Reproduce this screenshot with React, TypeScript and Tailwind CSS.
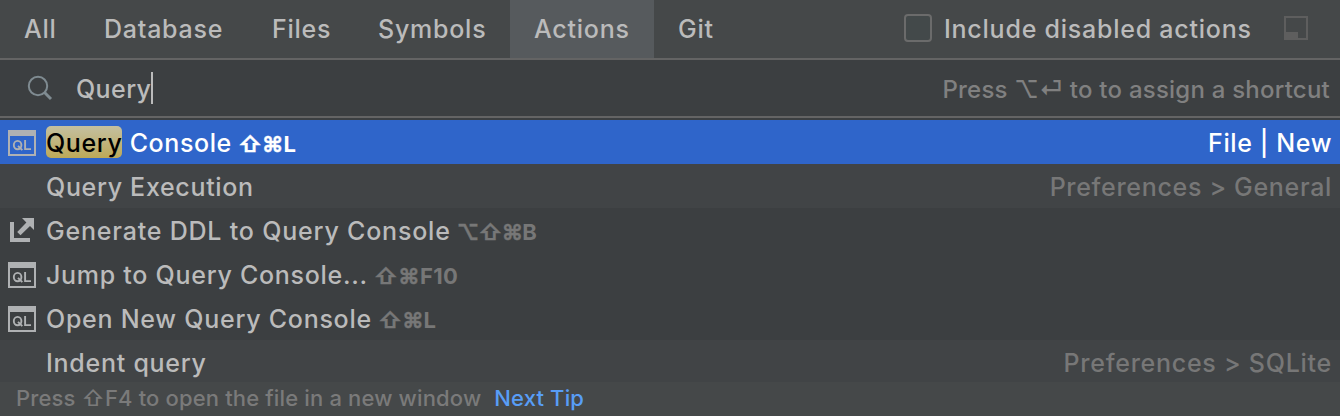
import React from "react";

const tabs = [
  { label: "All", cls: "w-20" },
  { label: "Database", cls: "w-[168px]" },
  { label: "Files", cls: "w-[106px]" },
  { label: "Symbols", cls: "w-[156px]" },
  { label: "Actions", cls: "w-36 bg-[#565a5d]" },
  { label: "Git", cls: "w-[84px]" },
];

function QueryIcon() {
  return (
    <svg width="28" height="26" viewBox="0 0 28 26" className="block">
      <path fill="#afb1b3" fillRule="evenodd" d="M0 0H28V26H0ZM2 6V24H26V6Z" />
      <g fill="none" stroke="#afb1b3" strokeWidth="1.9">
        <ellipse cx="9.6" cy="15.1" rx="3.8" ry="4.2" />
        <path d="M10 15.8L14.3 20.2M17.1 10V19.1H23" />
      </g>
    </svg>
  );
}

function ExportIcon() {
  return (
    <svg width="28" height="26" viewBox="0 0 28 26" className="block">
      <path fill="#afb1b3" d="M2 4H6V20H22V24H2Z" />
      <path fill="#afb1b3" d="M14 0H26V12L22 8L12.5 17.3L9.2 14L18.4 4.4Z" />
    </svg>
  );
}

type Row = {
  icon?: "ql" | "export";
  label: string;
  match?: string;
  mods?: string;
  keyName?: string;
  keysTrack?: string;
  path?: string;
  track: string;
  bg: string;
};

const rows: Row[] = [
  { icon: "ql", match: "Query", label: " Console", mods: "⇧⌘", keyName: "L", path: "File | New", track: "tracking-[0.6px]", bg: "h-11 bg-[#2f65ca] text-white" },
  { label: "Query Execution", path: "Preferences > General", track: "tracking-[0.68px]", bg: "h-11 bg-[#414446]" },
  { icon: "export", label: "Generate DDL to Query Console", mods: "⌥⇧⌘", keyName: "B", keysTrack: "tracking-[-0.8px]", track: "tracking-[0.8px]", bg: "h-11 bg-[#3c3f41]" },
  { icon: "ql", label: "Jump to Query Console...", mods: "⇧⌘", keyName: "F10", keysTrack: "tracking-[0.3px]", track: "tracking-[0.72px]", bg: "h-11 bg-[#3c3f41]" },
  { icon: "ql", label: "Open New Query Console", mods: "⇧⌘", keyName: "L", track: "tracking-[0.74px]", bg: "h-11 bg-[#3c3f41]" },
  { label: "Indent query", path: "Preferences > SQLite", track: "tracking-[0.74px]", bg: "h-[42px] bg-[#414446]" },
];

function ResultRow({ row, selected }: { row: Row; selected: boolean }) {
  return (
    <div className={`flex items-start px-2 ${row.bg}`}>
      <div className="mt-2.5 w-[38px] shrink-0">
        {row.icon === "ql" && <QueryIcon />}
        {row.icon === "export" && <ExportIcon />}
      </div>
      <div className={`flex whitespace-pre text-[25px] leading-[46px] ${row.track}`}>
        {row.match && (
          <span className="mt-1.5 h-8 rounded-[5px] bg-linear-to-b from-[#c4c0a0] to-[#bda957] leading-[34px] text-black">{row.match}</span>
        )}
        <span>{row.label}</span>
      </div>
      {row.mods && (
        <span className={`ml-1.5 mt-[3px] text-[22px] font-bold leading-[42px] ${row.keysTrack ?? ""} ${selected ? "text-white" : "text-[#777777]"}`}>
          <span className="[-webkit-text-stroke:0.35px_currentColor]">{row.mods}</span>
          {row.keyName}
        </span>
      )}
      {row.path && (
        <span className={`ml-auto whitespace-pre text-[25px] leading-[46px] ${row.track} ${selected ? "text-white" : "text-[#777777]"}`}>{row.path}</span>
      )}
    </div>
  );
}

export default function App() {
  return (
    <div className="flex h-[416px] w-[1340px] flex-col overflow-hidden bg-[#454849] font-['Inter','DejaVu_Sans',sans-serif] font-medium text-[#bbbbbb]">
      <header className="flex h-[60px] shrink-0 border-b-2 border-[#646464] text-[25px] leading-[58px] tracking-[0.76px]">
        {tabs.map((t) => (
          <button key={t.label} className={`shrink-0 pl-6 text-left ${t.cls}`}>{t.label}</button>
        ))}
        <label className="ml-auto flex items-center">
          <span className="mr-3 -mt-0.5 size-7 rounded-[4px] border-2 border-[#6b6b6b] bg-[#43494a]" />
          <span className="w-[340px]">Include disabled actions</span>
        </label>
        <svg width="24" height="24" viewBox="0 0 24 24" className="mr-8 mt-4">
          <path fill="#5e5e5e" fillRule="evenodd" d="M0 0H24V24H0ZM2 2V16H14V22H22V2Z" />
        </svg>
      </header>
      <div className="flex h-[58px] shrink-0 items-center border-b-2 border-[#646464] bg-[#3c3f41]">
        <svg width="28" height="28" viewBox="0 0 28 28" className="ml-[26px]" fill="none" stroke="#7f8b91">
          <circle cx="12" cy="12" r="9.2" strokeWidth="2" />
          <path d="M18.3 18.3L25 25" strokeWidth="3" />
        </svg>
        <span className="ml-[22px] pt-[3px] text-[25px] tracking-[0.4px]">Query</span>
        <span className="h-8 w-0.5 bg-[#bbbbbb]" />
        <span className="ml-auto mr-2.5 pt-1 text-[24px] tracking-[0.23px] text-[#808080]">Press ⌥⏎ to to assign a shortcut</span>
      </div>
      <main className="flex shrink-0 flex-col bg-[#3c3f41] pt-0.5">
        {rows.map((r, i) => (
          <ResultRow key={r.label} row={r} selected={i === 0} />
        ))}
      </main>
      <footer className="flex flex-1 pl-4 text-[22px] leading-[33px] tracking-[0.15px] text-[#7a7a7a]">
        <span>Press ⇧F4 to open the file in a new window</span>
        <span className="ml-[13px] text-[#589df6]">Next Tip</span>
      </footer>
    </div>
  );
}
